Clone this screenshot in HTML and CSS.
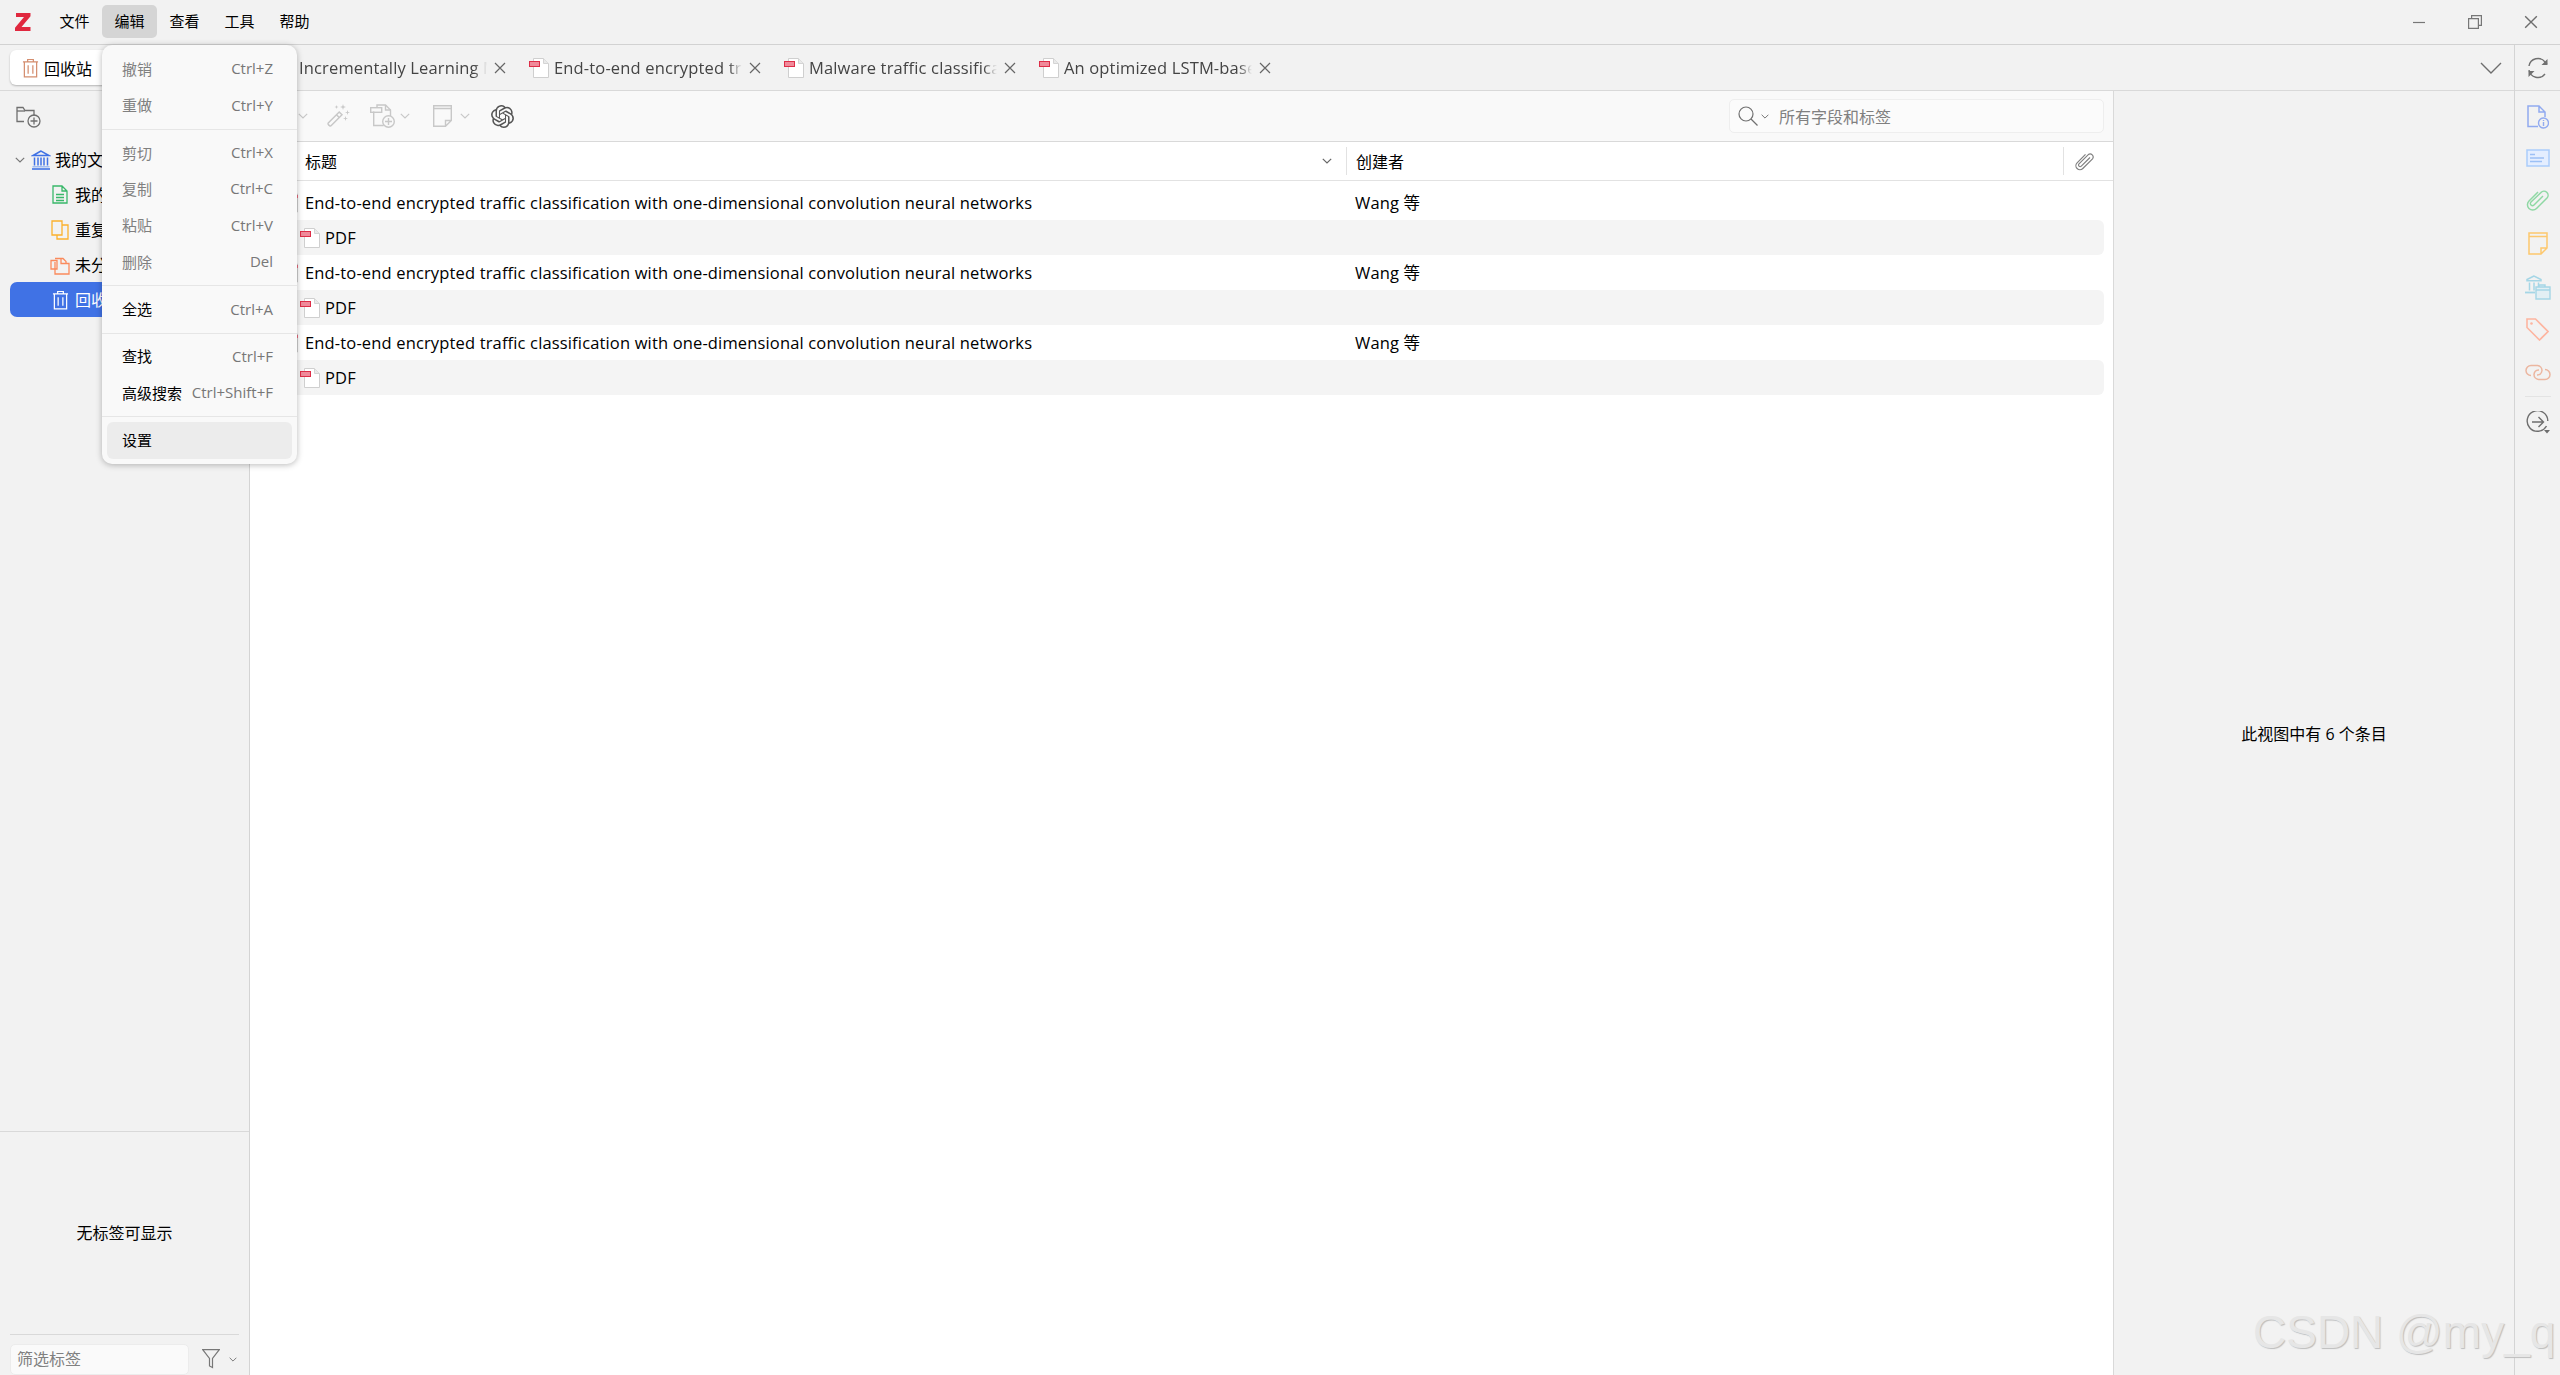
FILE: index.html
```html
<!DOCTYPE html>
<html lang="zh">
<head>
<meta charset="utf-8">
<title>Zotero</title>
<link rel="stylesheet" href="styles.css">
</head>
<body>
<svg class="defs" width="0" height="0" aria-hidden="true">
  <symbol id="pdf" viewBox="0 0 20 20">
    <path d="M4.5.5h10l5 5v14h-15z" fill="#fff" stroke="#cfcfcf"/>
    <path d="M14.5.5v5h5" fill="#e9e9e9" stroke="#d4d4d4"/>
    <rect x=".5" y="3.5" width="10" height="5" fill="#f08a9a" stroke="#dd2e48"/>
  </symbol>
  <symbol id="pdf-mini" viewBox="0 0 14 20">
    <path d="M4 1h9.500v18H4z" fill="#fff" stroke="#cfcfcf"/>
    <rect x="1" y="2" width="13" height="3" fill="#e8687c"/>
  </symbol>
  <symbol id="close" viewBox="0 0 12 12">
    <path d="M1 1l10 10M11 1L1 11" fill="none" stroke="currentColor" stroke-width="1.2"/>
  </symbol>
  <symbol id="chev" viewBox="0 0 10 6">
    <path d="M.8.8L5 5l4.2-4.2" fill="none" stroke="currentColor" stroke-width="1.2"/>
  </symbol>
  <symbol id="trash" viewBox="0 0 18 20">
    <path d="M1 3.5h16M6 3.5V1h6v2.5M2.5 3.5v15.8h13V3.5M6.5 7v9M11.500 7v9" fill="none" stroke="currentColor" stroke-width="1.3"/>
  </symbol>
</svg>

<div class="app">
  <header class="titlebar">
    <svg class="logo" width="16" height="18" viewBox="0 0 16 18"><path d="M1 0h14.500v3.200L6.500 14h9v4H0v-3.200L9 4H1z" fill="#e0283f"/></svg>
    <nav class="menubar">
      <span class="menubar-item">文件</span>
      <span class="menubar-item is-open">编辑</span>
      <span class="menubar-item">查看</span>
      <span class="menubar-item">工具</span>
      <span class="menubar-item">帮助</span>
    </nav>
    <div class="winctl">
      <svg width="14" height="14" viewBox="0 0 14 14"><path d="M1 7.500h12" stroke="#777" stroke-width="1.200"/></svg>
      <svg width="14" height="14" viewBox="0 0 14 14"><path d="M.6 3.600h9.800v9.800H.6zM3.600 3.600V.6h9.800v9.800h-3" fill="none" stroke="#777" stroke-width="1.200"/></svg>
      <svg class="win-close" width="14" height="14"><use href="#close"/></svg>
    </div>
  </header>

  <div class="work">
    <div class="main-col">
      <div class="tabbar">
        <div class="tab-lib">
          <svg class="tab-lib-icon" width="17" height="20"><use href="#trash"/></svg>
          <span>回收站</span>
        </div>
        <div class="tab">
          <svg class="tab-pdf" width="20" height="20"><use href="#pdf"/></svg>
          <span class="tab-text">Incrementally Learning Malware</span>
          <svg class="tab-close" width="12" height="12"><use href="#close"/></svg>
        </div>
        <div class="tab">
          <svg class="tab-pdf" width="20" height="20"><use href="#pdf"/></svg>
          <span class="tab-text">End-to-end encrypted traffic</span>
          <svg class="tab-close" width="12" height="12"><use href="#close"/></svg>
        </div>
        <div class="tab">
          <svg class="tab-pdf" width="20" height="20"><use href="#pdf"/></svg>
          <span class="tab-text">Malware traffic classification</span>
          <svg class="tab-close" width="12" height="12"><use href="#close"/></svg>
        </div>
        <div class="tab">
          <svg class="tab-pdf" width="20" height="20"><use href="#pdf"/></svg>
          <span class="tab-text">An optimized LSTM-based model</span>
          <svg class="tab-close" width="12" height="12"><use href="#close"/></svg>
        </div>
        <svg class="tabs-menu" width="22" height="12" viewBox="0 0 22 12"><path d="M1 1l10 10L21 1" fill="none" stroke="#6e6e6e" stroke-width="1.400"/></svg>
      </div>

      <div class="panes">
        <aside class="sidebar">
          <div class="sb-toolbar">
            <svg width="25" height="22" viewBox="0 0 25 22"><path d="M8 15.500H1V1.500h6l2 3h9v5.500" fill="none" stroke="#6f6f6f" stroke-width="1.300"/><path d="M1 5h8" stroke="#6f6f6f" stroke-width="1.300"/><circle cx="18" cy="15" r="6" fill="none" stroke="#6f6f6f" stroke-width="1.300"/><path d="M18 11.500v7M14.500 15h7" stroke="#6f6f6f" stroke-width="1.300"/></svg>
          </div>
          <div class="tree">
            <div class="tree-row">
              <svg class="twisty" width="10" height="6"><use href="#chev"/></svg>
              <svg class="tree-lib" width="20" height="20" viewBox="0 0 20 20"><path d="M10 1L2 5.500h16zM3.500 7.500v8M7 7.500v8M10 7.500v8M13 7.500v8M16.500 7.500v8" fill="none" stroke="#4072e5" stroke-width="1.500"/><path d="M1 19h18" stroke="#4072e5" stroke-width="1.600"/><path d="M1.500 16.800h17" stroke="#8fb0f2" stroke-width="1.200"/></svg>
              <span class="tree-label">我的文库</span>
            </div>
            <div class="tree-row is-child">
              <div class="slot"><svg width="16" height="19" viewBox="0 0 16 19"><path d="M1 1h9l5 5v12H1zM10 1v5h5M4 9.500h8M4 12.500h8M4 15.500h8" fill="none" stroke="#39b86a" stroke-width="1.300"/></svg></div>
              <span class="tree-label">我的出版物</span>
            </div>
            <div class="tree-row is-child">
              <div class="slot"><svg width="18" height="20" viewBox="0 0 18 20"><path d="M1 1h10v14H1z" fill="none" stroke="#fbb12c" stroke-width="1.300"/><path d="M11 5h6v14H6v-4" fill="none" stroke="#fbb12c" stroke-width="1.300"/></svg></div>
              <span class="tree-label">重复条目</span>
            </div>
            <div class="tree-row is-child">
              <div class="slot"><svg width="20" height="20" viewBox="0 0 20 20"><path d="M5 3.500h8l3 3v2M5 7V19h14V8.500h-8V3" fill="none" stroke="#fa8a5c" stroke-width="1.300"/><path d="M1 5.500h6V14H1z" fill="none" stroke="#fa8a5c" stroke-width="1.300"/></svg></div>
              <span class="tree-label">未分类条目</span>
            </div>
            <div class="tree-row is-child is-selected">
              <div class="slot"><svg class="tree-trash" width="17" height="20"><use href="#trash"/></svg></div>
              <span class="tree-label">回收站</span>
            </div>
          </div>
          <div class="tags">
            <div class="tags-msg">无标签可显示</div>
            <div class="tags-foot">
              <div class="tags-input">筛选标签</div>
              <svg width="18" height="20" viewBox="0 0 18 20"><path d="M.7.7h16.600L10.500 9.500v9l-3-1.500V9.500z" fill="none" stroke="#777" stroke-width="1.200"/></svg>
              <svg class="tags-chev" width="8" height="5"><use href="#chev"/></svg>
            </div>
          </div>
        </aside>

        <section class="center">
          <div class="toolbar">
            <svg class="tb-chev" width="10" height="6"><use href="#chev"/></svg>
            <svg class="tb-wand" width="24" height="24" viewBox="0 0 24 24"><path d="M2.200 19l11-11 2.800 2.800-11 11c-1 1-3.800-1.800-2.800-2.800z" fill="none" stroke="#c8c8c8" stroke-width="1.500"/><path d="M10.500 10.800l2.700 2.700" stroke="#c8c8c8" stroke-width="1.500"/><path d="M17 0l.7 2.300L20 3l-2.300.7L17 6l-.7-2.300L14 3l2.300-.7zM21.500 6l.6 1.900 1.900.6-1.900.6-.6 1.900-.6-1.900-1.900-.6 1.900-.6zM19.500 12l.6 1.900 1.900.6-1.900.6-.6 1.900-.6-1.900-1.900-.6 1.900-.6zM10.500 1l.5 1.500 1.500.5-1.500.5-.5 1.500-.5-1.500L8.500 3l1.500-.5z" fill="#c8c8c8"/></svg>
            <svg class="tb-attach" width="25" height="24" viewBox="0 0 25 24"><path d="M3.700 7.500V21.500h10M7 3.500V1h8.500l5 5v6" fill="none" stroke="#c8c8c8" stroke-width="1.400"/><path d="M15.500 1v5h5" fill="none" stroke="#c8c8c8" stroke-width="1.400"/><rect x=".7" y="3.700" width="11" height="4.600" fill="none" stroke="#c8c8c8" stroke-width="1.400"/><circle cx="18.500" cy="17.500" r="5.800" fill="#f9f9f9" stroke="#c8c8c8" stroke-width="1.400"/><path d="M18.500 14v7M15 17.500h7" stroke="#c8c8c8" stroke-width="1.400"/></svg>
            <svg class="tb-chev" width="10" height="6"><use href="#chev"/></svg>
            <svg class="tb-note" width="19" height="22" viewBox="0 0 19 22"><path d="M.7.7h17.600v14.800l-5.800 5.800H.7zM.7 3.500h17.600M12.500 21.300v-5.800h5.800" fill="none" stroke="#c8c8c8" stroke-width="1.400"/></svg>
            <svg class="tb-chev" width="10" height="6"><use href="#chev"/></svg>
            <svg class="tb-ai" width="23" height="23" viewBox="0 0 24 24"><path fill="#555" d="M22.2819 9.8211a5.9847 5.9847 0 0 0-.5157-4.9108 6.0462 6.0462 0 0 0-6.5098-2.9A6.0651 6.0651 0 0 0 4.9807 4.1818a5.9847 5.9847 0 0 0-3.9977 2.9 6.0462 6.0462 0 0 0 .7427 7.0966 5.98 5.98 0 0 0 .511 4.9107 6.051 6.051 0 0 0 6.5146 2.9001A5.9847 5.9847 0 0 0 13.2599 24a6.0557 6.0557 0 0 0 5.7718-4.2058 5.9894 5.9894 0 0 0 3.9977-2.9001 6.0557 6.0557 0 0 0-.7475-7.0729zm-9.022 12.6081a4.4755 4.4755 0 0 1-2.8764-1.0408l.1419-.0804 4.7783-2.7582a.7948.7948 0 0 0 .3927-.6813v-6.7369l2.02 1.1686a.071.071 0 0 1 .038.052v5.5826a4.504 4.504 0 0 1-4.4945 4.4944zm-9.6607-4.1254a4.4708 4.4708 0 0 1-.5346-3.0137l.142.0852 4.783 2.7582a.7712.7712 0 0 0 .7806 0l5.8428-3.3685v2.3324a.0804.0804 0 0 1-.0332.0615L9.74 19.9502a4.4992 4.4992 0 0 1-6.1408-1.6464zM2.3408 7.8956a4.485 4.485 0 0 1 2.3655-1.9728V11.6a.7664.7664 0 0 0 .3879.6765l5.8144 3.3543-2.0201 1.1685a.0757.0757 0 0 1-.071 0l-4.8303-2.7865A4.504 4.504 0 0 1 2.3408 7.872zm16.5963 3.8558L13.1038 8.364 15.1192 7.2a.0757.0757 0 0 1 .071 0l4.8303 2.7913a4.4944 4.4944 0 0 1-.6765 8.1042v-5.6772a.79.79 0 0 0-.407-.667zm2.0107-3.0231l-.142-.0852-4.7735-2.7818a.7759.7759 0 0 0-.7854 0L9.409 9.2297V6.8974a.0662.0662 0 0 1 .0284-.0615l4.8303-2.7866a4.4992 4.4992 0 0 1 6.6802 4.66zM8.3065 12.863l-2.02-1.1638a.0804.0804 0 0 1-.038-.0567V6.0742a4.4992 4.4992 0 0 1 7.3757-3.4537l-.142.0805L8.704 5.459a.7948.7948 0 0 0-.3927.6813zm1.0976-2.3654l2.602-1.4998 2.6069 1.4998v2.9994l-2.5974 1.4997-2.6067-1.4997Z"/></svg>
            <div class="search">
              <svg width="20" height="21" viewBox="0 0 20 21"><circle cx="8" cy="8" r="7" fill="none" stroke="#707070" stroke-width="1.200"/><path d="M13 13l6.500 6.500" stroke="#707070" stroke-width="1.200"/></svg>
              <svg class="search-chev" width="8" height="5"><use href="#chev"/></svg>
              <span>所有字段和标签</span>
            </div>
          </div>

          <div class="thead">
            <div class="th th-title"><span>标题</span><svg class="th-sort" width="10" height="6"><use href="#chev"/></svg></div>
            <div class="th th-creator">创建者</div>
            <div class="th th-att"><svg width="20" height="20" viewBox="0 0 20 20"><path d="M15.500 6L6.800 14.700a1.600 1.600 0 0 1-2.300-2.300l9.300-9.300a3 3 0 0 1 4.200 4.200l-9.700 9.700a4 4 0 0 1-5.700-5.700L11 2.900" transform="translate(.5 .5)" fill="none" stroke="#808080" stroke-width="1.200"/></svg></div>
          </div>

          <div class="tbody">
            <div class="row">
              <div class="cell-title"><svg class="row-icon" width="14" height="20"><use href="#pdf-mini"/></svg><span class="latin">End-to-end encrypted traffic classification with one-dimensional convolution neural networks</span></div>
              <div class="cell-creator latin">Wang 等</div>
            </div>
            <div class="row is-alt"><div class="cell-pdf"><svg width="20" height="20"><use href="#pdf"/></svg><span class="latin">PDF</span></div></div>
            <div class="row">
              <div class="cell-title"><svg class="row-icon" width="14" height="20"><use href="#pdf-mini"/></svg><span class="latin">End-to-end encrypted traffic classification with one-dimensional convolution neural networks</span></div>
              <div class="cell-creator latin">Wang 等</div>
            </div>
            <div class="row is-alt"><div class="cell-pdf"><svg width="20" height="20"><use href="#pdf"/></svg><span class="latin">PDF</span></div></div>
            <div class="row">
              <div class="cell-title"><svg class="row-icon" width="14" height="20"><use href="#pdf-mini"/></svg><span class="latin">End-to-end encrypted traffic classification with one-dimensional convolution neural networks</span></div>
              <div class="cell-creator latin">Wang 等</div>
            </div>
            <div class="row is-alt"><div class="cell-pdf"><svg width="20" height="20"><use href="#pdf"/></svg><span class="latin">PDF</span></div></div>
          </div>
        </section>

        <section class="detail">此视图中有 6 个条目</section>
      </div>
    </div>

    <aside class="sidenav">
      <div class="sidenav-top">
        <svg width="22" height="22" viewBox="0 0 22 22"><path d="M2 9a9 9 0 0 1 16-4l2 2M2 13a9 9 0 0 0 16 4" fill="none" stroke="#707070" stroke-width="1.400"/><path d="M20.500 2v6h-6z" fill="#707070"/><path d="M1.500 20v-6h6z" fill="#707070"/></svg>
      </div>
      <div class="sidenav-list">
        <svg class="nav-info" width="22" height="24" viewBox="0 0 22 24"><path d="M11 21.500H1V1h11l6 6v5M12 1v6h6" fill="none" stroke="#91aaf0" stroke-width="1.500"/><circle cx="16.500" cy="18" r="5" fill="#f2f2f2" stroke="#91aaf0" stroke-width="1.400"/><path d="M16.500 17v4M16.500 15v1" stroke="#91aaf0" stroke-width="1.400"/></svg>
        <svg class="nav-abstract" width="24" height="18" viewBox="0 0 24 18"><path d="M1 1h22v16H1z" fill="#e4eeff" stroke="#abcdfb" stroke-width="1.500"/><path d="M4 5.500h5M4 9h14M4 12.500h12" stroke="#9cc0f5" stroke-width="1.300"/></svg>
        <svg class="nav-att" width="24" height="22" viewBox="0 0 24 22"><path d="M17 6L8 15a2 2 0 0 1-3-3L15 2.500a4 4 0 0 1 6 5.500L10.500 18.500a5.200 5.200 0 0 1-7.500-7.500L12 2" fill="none" stroke="#8fd8a4" stroke-width="1.500"/></svg>
        <svg class="nav-note" width="20" height="23" viewBox="0 0 20 23"><path d="M1 1h18v15l-6 6H1zM1 4.500h18M13 22v-6h6" fill="none" stroke="#fdc86e" stroke-width="1.500"/></svg>
        <svg class="nav-lib" width="26" height="25" viewBox="0 0 26 25"><path d="M9 1L2 4.500v1.300h14V4.500zM4.500 7.500v8M9 7.500v8M13.500 7.500v6" fill="none" stroke="#a5d6e6" stroke-width="1.500"/><path d="M0 17.500h10" stroke="#a5d6e6" stroke-width="1.800"/><path d="M11 12h14v12H11zM11 15h14M14 12V10h6v2" fill="#e2eff4" stroke="#a5d6e6" stroke-width="1.400"/></svg>
        <svg class="nav-tag" width="23" height="23" viewBox="0 0 23 23"><path d="M1 1h8.500L22 13.500l-8.500 8.500L1 9.500z" fill="none" stroke="#fdb5a0" stroke-width="1.600"/><circle cx="5.500" cy="5.500" r="1.300" fill="#fdb5a0"/></svg>
        <svg class="nav-link" width="26" height="17" viewBox="0 0 26 17"><path d="M6 11.500a5 5 0 0 1 0-10h6.500a5 5 0 0 1 4.500 5 5 5 0 0 1-4.500 4.500H12" fill="none" stroke="#ecb6a0" stroke-width="1.500"/><path d="M20 5.500a5 5 0 0 1 0 10h-6.500a5 5 0 0 1-4.500-5 5 5 0 0 1 4.500-4.500H14" fill="none" stroke="#ecb6a0" stroke-width="1.500"/></svg>
        <div class="nav-sep"></div>
        <svg class="nav-locate" width="24" height="24" viewBox="0 0 24 24"><path d="M20.500 15A10.300 10.300 0 1 1 21.800 10" fill="none" stroke="#6e6e6e" stroke-width="1.400"/><path d="M6 11h11M12.500 6l5 5-5 5" fill="none" stroke="#6e6e6e" stroke-width="1.400"/><path d="M18 19h6l-3 3.500z" fill="#6e6e6e"/></svg>
      </div>
    </aside>
  </div>

  <div class="menu">
    <div class="menu-item is-disabled"><span>撤销</span><span class="key">Ctrl+Z</span></div>
    <div class="menu-item is-disabled"><span>重做</span><span class="key">Ctrl+Y</span></div>
    <div class="menu-sep"></div>
    <div class="menu-item is-disabled"><span>剪切</span><span class="key">Ctrl+X</span></div>
    <div class="menu-item is-disabled"><span>复制</span><span class="key">Ctrl+C</span></div>
    <div class="menu-item is-disabled"><span>粘贴</span><span class="key">Ctrl+V</span></div>
    <div class="menu-item is-disabled"><span>删除</span><span class="key">Del</span></div>
    <div class="menu-sep"></div>
    <div class="menu-item"><span>全选</span><span class="key">Ctrl+A</span></div>
    <div class="menu-sep"></div>
    <div class="menu-item"><span>查找</span><span class="key">Ctrl+F</span></div>
    <div class="menu-item"><span>高级搜索</span><span class="key">Ctrl+Shift+F</span></div>
    <div class="menu-sep"></div>
    <div class="menu-item is-hover"><span>设置</span></div>
  </div>

  <div class="watermark">CSDN @my_q</div>
</div>
</body>
</html>
```

FILE: styles.css
```css
* { box-sizing: border-box; }
html, body { margin: 0; height: 100%; }
body {
  font-family: "Open Sans", "Noto Sans CJK SC", sans-serif;
  font-size: 16px;
  color: #000;
  background: #f2f2f2;
  overflow: hidden;
}
svg { display: block; flex: none; }
.defs { position: absolute; }

.app { position: relative; display: flex; flex-direction: column; width: 2560px; height: 1375px; overflow: hidden; }

/* title bar */
.titlebar { display: flex; align-items: center; height: 45px; flex: none; border-bottom: 1px solid #d2d2d2; padding-left: 15px; }
.logo { margin-top: -1px; }
.menubar { display: flex; margin-left: 16px; }
.menubar-item { width: 55px; height: 33px; line-height: 33px; text-align: center; font-size: 15px; border-radius: 5px; margin-top: -1px; }
.menubar-item.is-open { background: #d5d5d5; }
.winctl { display: flex; align-items: center; gap: 42px; margin-left: auto; padding-right: 22px; }
.win-close { color: #6e6e6e; }

/* body */
.work { flex: 1; display: flex; min-height: 0; }
.main-col { flex: 1; min-width: 0; display: flex; flex-direction: column; }

/* tabs */
.tabbar { height: 46px; flex: none; display: flex; align-items: flex-start; border-bottom: 1px solid #d9d9d9; padding-left: 10px; }
.tab-lib { display: flex; align-items: center; gap: 5px; width: 245px; height: 35px; margin-top: 5px; margin-right: 10px; padding-left: 12px; background: #fff; border-radius: 6px; box-shadow: 0 1px 2px rgba(0,0,0,.25); }
.tab-lib-icon { color: #d48d6e; }
.tab { display: flex; align-items: center; width: 255px; height: 45px; padding-left: 9px; color: #444; }
.tab-pdf { margin-right: 5px; }
.tab-text { width: 188px; overflow: hidden; white-space: nowrap; font-size: 16.500px; letter-spacing: .15px; -webkit-mask-image: linear-gradient(to right, #000 93%, transparent); mask-image: linear-gradient(to right, #000 93%, transparent); }
.tab-close { color: #666; margin-left: 7px; }
.tabs-menu { margin-left: auto; margin-right: 12px; align-self: center; }

/* panes */
.panes { flex: 1; display: flex; min-height: 0; }
.sidebar { width: 250px; flex: none; display: flex; flex-direction: column; border-right: 1px solid #d4d4d4; }
.sb-toolbar { height: 51px; flex: none; padding: 15px 0 0 16px; }
.tree { flex: 1; }
.tree-row { display: flex; align-items: center; height: 35px; margin: 0 10px; padding-left: 5px; gap: 5px; border-radius: 7px; white-space: nowrap; }
.tree-label { margin-top: -2px; }
.twisty { color: #777; margin-right: 1px; }
.tree-lib { margin-right: -1px; }
.slot { width: 20px; display: flex; justify-content: center; flex: none; }
.tree-row.is-child { padding-left: 40px; }
.tree-row.is-selected { background: #4072e5; color: #fff; }
.tree-trash { color: #fff; }
.tags { height: 244px; flex: none; display: flex; flex-direction: column; border-top: 1px solid #d9d9d9; }
.tags-msg { flex: 1; display: flex; align-items: center; justify-content: center; padding-bottom: 2px; }
.tags-foot { height: 41px; flex: none; margin: 0 10px; padding-top: 9px; border-top: 1px solid #d9d9d9; display: flex; align-items: flex-start; }
.tags-input { width: 179px; height: 31px; background: #fafafa; border: 1px solid #ececec; border-radius: 5px; padding-left: 6px; line-height: 28px; color: #808080; margin-right: 13px; }
.tags-foot svg { margin-top: 5px; }
.tags-foot .tags-chev { margin: 13px 0 0 9px; color: #777; }

.center { width: 1864px; flex: none; display: flex; flex-direction: column; background: #fff; border-right: 1px solid #d9d9d9; }
.toolbar { height: 51px; flex: none; display: flex; align-items: center; background: #f9f9f9; border-bottom: 1px solid #d9d9d9; padding: 0 9px 0 48px; }
.tb-chev { color: #c8c8c8; }
.tb-wand { margin-left: 18px; }
.tb-attach { margin-left: 20px; margin-right: 5px; }
.tb-note { margin-left: 23px; margin-right: 8px; }
.tb-ai { margin-left: 21px; }
.search { display: flex; align-items: center; width: 375px; height: 34px; margin-left: auto; padding-left: 8px; background: #fbfbfb; border: 1px solid #eeeeee; border-radius: 5px; color: #808080; }
.search-chev { color: #707070; margin: 0 10px 0 3px; }

.thead { height: 39px; flex: none; display: flex; align-items: center; border-bottom: 1px solid #e2e2e2; }
.th { height: 28px; display: flex; align-items: center; }
.th-title { width: 1096px; padding-left: 55px; justify-content: space-between; padding-right: 14px; }
.th-sort { color: #666; }
.th-creator { width: 717px; padding-left: 9px; border-left: 1px solid #e2e2e2; }
.th-att { flex: 1; padding-left: 10px; border-left: 1px solid #e2e2e2; }

.tbody { flex: 1; padding: 4px 9px 0 8px; }
.row { display: flex; align-items: center; height: 35px; border-radius: 6px; white-space: nowrap; }
.row.is-alt { background: #f4f4f4; }
.latin { font-size: 16.500px; letter-spacing: .15px; margin-top: -1px; }
.cell-title { width: 1088px; display: flex; align-items: center; padding-left: 26px; gap: 7px; }
.cell-creator { padding-left: 9px; }
.cell-pdf { display: flex; align-items: center; gap: 5px; padding-left: 42px; }

.detail { flex: 1; display: flex; align-items: center; justify-content: center; }

/* side nav */
.sidenav { width: 46px; flex: none; border-left: 1px solid #d4d4d4; display: flex; flex-direction: column; align-items: center; }
.sidenav-top { height: 46px; width: 100%; flex: none; display: flex; align-items: center; justify-content: center; border-bottom: 1px solid #d9d9d9; }
.sidenav-list { display: flex; flex-direction: column; align-items: center; padding-top: 14px; }
.nav-abstract { margin-top: 20px; }
.nav-att { margin-top: 23px; }
.nav-note { margin-top: 19.500px; }
.nav-lib { margin-top: 20px; }
.nav-tag { margin-top: 18px; }
.nav-link { margin-top: 23px; }
.nav-sep { width: 26px; height: 1px; background: #e3e3e3; margin-top: 15.500px; }
.nav-locate { margin-top: 14px; }

/* open menu */
.menu { position: absolute; left: 102px; top: 45px; width: 195px; height: 419px; padding: 5.800px 0 0; background: #f9f9f9; border-radius: 10px; box-shadow: 0 1px 6px rgba(0,0,0,.28); font-size: 15px; }
.menu-item { display: flex; align-items: center; justify-content: space-between; height: 36.400px; margin: 0 5px; padding: 0 19px 1.500px 15px; border-radius: 6px; white-space: nowrap; }
.menu-item.is-disabled { color: #808080; }
.menu-item.is-hover { background: #ececec; }
.key { color: #777; }
.menu-sep { height: 1px; background: #e6e6e6; margin: 5px 0; }

.watermark { position: absolute; left: 2253px; top: 1302px; font-family: "Liberation Sans", sans-serif; font-size: 46px; line-height: 60px; color: #e6e6e6; text-shadow: 1px 1px 1px #bdbdbd; white-space: nowrap; }
```
